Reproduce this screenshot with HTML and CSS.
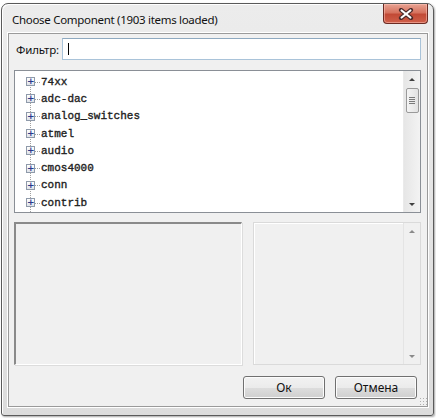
FILE: index.html
```html
<!DOCTYPE html>
<html>
<head>
<meta charset="utf-8">
<link rel="stylesheet" href="styles.css">
</head>
<body>
<div class="window">
  <div class="titlebar">
    <span class="title">Choose Component (1903 items loaded)</span>
    <div class="close"><svg width="16" height="12" viewBox="0 0 16 12"><path d="M3 2 L13 10 M13 2 L3 10" stroke="#4a2a2a" stroke-width="4.2" stroke-linecap="round"/><path d="M3.6 2.5 L12.4 9.5 M12.4 2.5 L3.6 9.5" stroke="#ffffff" stroke-width="2.2" stroke-linecap="round"/></svg></div>
  </div>
  <div class="client">
    <div class="filter-row">
      <label class="filter-label">Фильтр:</label>
      <div class="input"><span class="caret"></span></div>
    </div>
    <div class="tree">
      <ul class="items">
        <li class="item"><span class="exp">+</span><span class="name">74xx</span></li>
        <li class="item"><span class="exp">+</span><span class="name">adc-dac</span></li>
        <li class="item"><span class="exp">+</span><span class="name">analog_switches</span></li>
        <li class="item"><span class="exp">+</span><span class="name">atmel</span></li>
        <li class="item"><span class="exp">+</span><span class="name">audio</span></li>
        <li class="item"><span class="exp">+</span><span class="name">cmos4000</span></li>
        <li class="item"><span class="exp">+</span><span class="name">conn</span></li>
        <li class="item"><span class="exp">+</span><span class="name">contrib</span></li>
      </ul>
      <div class="vscroll">
        <div class="arrow up"></div>
        <div class="thumb"><span></span><span></span><span></span><span></span></div>
        <div class="track"></div>
        <div class="arrow down"></div>
      </div>
    </div>
    <div class="panels">
      <div class="panel-left"></div>
      <div class="panel-right">
        <div class="vscroll dim">
          <div class="arrow up"></div>
          <div class="track"></div>
          <div class="arrow down"></div>
        </div>
      </div>
    </div>
    <div class="buttons">
      <button class="btn">Ок</button>
      <button class="btn">Отмена</button>
      <div class="grip"></div>
    </div>
  </div>
</div>
</body>
</html>
```

FILE: styles.css
```css
html, body {
  margin: 0;
  padding: 0;
  background: #ffffff;
}
body {
  padding: 3px 2px 2px 1px;
  font-family: "Noto Sans", "Open Sans", sans-serif;
}
.window {
  position: relative;
  width: 431px;
  height: 411px;
  border: 1px solid #5a5a5a;
  border-radius: 7px 7px 3px 3px;
  background: linear-gradient(#ececec, #dcdcdc);
  box-shadow: inset 1px 1px 0 #ffffff, 1px 1px 2px rgba(0,0,0,0.35);
  display: flex;
  flex-direction: column;
}
.titlebar {
  height: 29px;
  display: flex;
  align-items: flex-start;
  justify-content: space-between;
  padding-left: 10px;
}
.title {
  font-size: 11.5px;
  color: #111;
  margin-top: 8px;
  letter-spacing: -0.3px;
}
.close {
  width: 43px;
  height: 19px;
  margin-right: 5px;
  border: 1px solid #6b2a22;
  border-top: none;
  border-radius: 0 0 4px 4px;
  background: linear-gradient(#e8a393 0%, #d6735f 45%, #c24a36 55%, #d0604a 100%);
  display: flex;
  align-items: center;
  justify-content: center;
  box-shadow: inset 0 0 0 1px rgba(255,200,190,0.5);
}
.client {
  flex: 1;
  margin: 0 5px 8px 6px;
  border: 1px solid #9a9a9a;
  box-shadow: 0 0 0 1px #ffffff;
  background: #f0f0f0;
  display: flex;
  flex-direction: column;
  padding: 4px 6px 0 5px;
}
.filter-row {
  display: flex;
  align-items: center;
  gap: 4px;
  height: 22px;
}
.filter-label {
  font-size: 11.5px;
  letter-spacing: -0.2px;
  color: #111;
  width: 42px;
  padding-left: 2px;
}
.input {
  flex: 1;
  height: 20px;
  border: 1px solid #a9c3d9;
  border-top-color: #8ea9c0;
  background: #ffffff;
  display: flex;
  align-items: center;
}
.caret {
  width: 1px;
  height: 12px;
  background: #000;
  margin-left: 5px;
}
.tree {
  margin-top: 10px;
  height: 141px;
  border: 1px solid #8a8f96;
  background: #ffffff;
  display: flex;
}
.items {
  list-style: none;
  margin: 0;
  padding: 2px 0 0 11px;
  flex: 1;
  position: relative;
  overflow: hidden;
}
.items::before {
  content: "";
  position: absolute;
  left: 15px;
  top: 10px;
  bottom: 0;
  border-left: 1px dotted #a0a0a0;
}
.item {
  height: 17.3px;
  display: flex;
  align-items: center;
  position: relative;
}
.exp {
  width: 7px;
  height: 7px;
  border: 1px solid #8f9aaa;
  background: linear-gradient(#ffffff, #dfe3ea);
  font-family: "DejaVu Sans", sans-serif;
  font-size: 9px;
  font-weight: bold;
  line-height: 7px;
  text-align: center;
  color: #2a3a8a;
  position: relative;
  z-index: 1;
}
.item::after {
  content: "";
  position: absolute;
  left: 9px;
  width: 5px;
  top: 50%;
  border-top: 1px dotted #a0a0a0;
}
.name {
  margin-left: 6px;
  font-family: "Liberation Mono", monospace;
  font-size: 11px;
  color: #222;
  -webkit-text-stroke: 0.35px #222;
}
.vscroll {
  width: 16px;
  background: linear-gradient(90deg, #e6e6e6, #f3f3f3);
  border-left: 1px solid #eaeaea;
  display: flex;
  flex-direction: column;
  align-items: center;
}
.arrow {
  height: 17px;
  width: 16px;
  position: relative;
}
.arrow::after {
  content: "";
  position: absolute;
  left: 5px;
  border-left: 3px solid transparent;
  border-right: 3px solid transparent;
}
.arrow.up::after {
  top: 7px;
  border-bottom: 3px solid #404040;
}
.arrow.down::after {
  top: 8px;
  border-top: 3px solid #404040;
}
.thumb {
  width: 13px;
  height: 25px;
  border: 1px solid #9a9a9a;
  border-radius: 2px;
  background: linear-gradient(90deg, #f4f4f4, #e2e2e2);
  box-sizing: border-box;
  display: flex;
  flex-direction: column;
  align-items: center;
  justify-content: center;
  gap: 1px;
}
.thumb span {
  width: 6px;
  height: 1px;
  background: #7a7a7a;
}
.track {
  flex: 1;
}
.panels {
  margin-top: 9px;
  height: 143px;
  display: flex;
  gap: 11px;
}
.panel-left {
  width: 225px;
  border-top: 2px solid #8a8a8a;
  border-left: 2px solid #8a8a8a;
  border-right: 1px solid #ffffff;
  border-bottom: 1px solid #ffffff;
  box-shadow: 1px 1px 0 #dcdcdc;
  background: #f0f0f0;
}
.panel-right {
  flex: 1;
  border: 1px solid #dadada;
  box-shadow: inset 1px 1px 0 #ffffff;
  background: #f0f0f0;
  display: flex;
  justify-content: flex-end;
}
.vscroll.dim {
  background: #f0f0f0;
  border-left: 1px solid #e4e4e4;
}
.vscroll.dim .arrow.up::after {
  border-bottom-color: #8a8a8a;
}
.vscroll.dim .arrow.down::after {
  border-top-color: #8a8a8a;
}
.buttons {
  margin-top: 11px;
  display: flex;
  justify-content: flex-end;
  gap: 10px;
  padding-right: 4px;
  position: relative;
}
.btn {
  width: 82px;
  height: 23px;
  border: 1px solid #707070;
  border-radius: 3px;
  background: linear-gradient(#f2f2f2 0%, #ebebeb 50%, #dddddd 51%, #cfcfcf 100%);
  box-shadow: inset 0 0 0 1px #fcfcfc;
  font-family: "Noto Sans", "Open Sans", sans-serif;
  font-size: 12px;
  color: #111;
  padding: 0;
}
.grip {
  position: absolute;
  right: -6px;
  bottom: -6px;
  width: 8px;
  height: 8px;
  background-image: radial-gradient(circle, #b0b0b0 0.8px, transparent 1px);
  background-size: 3px 3px;
}
```
